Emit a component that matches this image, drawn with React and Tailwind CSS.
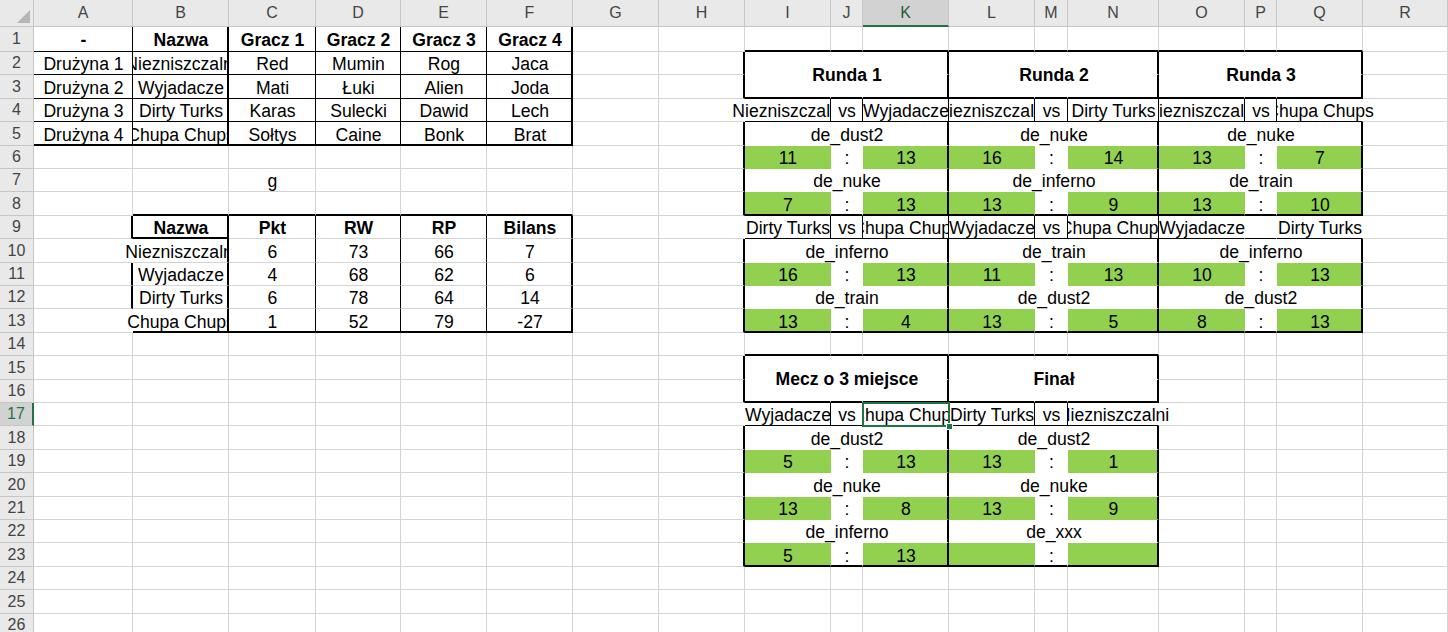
import React from "react";

// grid helpers (full class names so tailwind picks them up)
const COL_START = [
  "col-start-1", "col-start-2", "col-start-3", "col-start-4", "col-start-5",
  "col-start-6", "col-start-7", "col-start-8", "col-start-9", "col-start-10",
  "col-start-11", "col-start-12", "col-start-13", "col-start-14", "col-start-15",
  "col-start-16", "col-start-17", "col-start-18", "col-start-19",
];
const ROW_START = [
  "row-start-1", "row-start-2", "row-start-3", "row-start-4", "row-start-5",
  "row-start-6", "row-start-7", "row-start-8", "row-start-9", "row-start-10",
  "row-start-11", "row-start-12", "row-start-13", "row-start-14", "row-start-15",
  "row-start-16", "row-start-17", "row-start-18", "row-start-19", "row-start-20",
  "row-start-21", "row-start-22", "row-start-23", "row-start-24", "row-start-25",
  "row-start-26", "row-start-27",
];
const COL_SPAN = ["", "col-span-1", "col-span-2", "col-span-3"];
const ROW_SPAN = ["", "row-span-1", "row-span-2"];
const WIDTH = [
  "w-[34px]", "w-[99px]", "w-[96px]", "w-[87px]", "w-[85px]", "w-[86px]",
  "w-[86px]", "w-[86px]", "w-[86px]", "w-[86px]", "w-[32px]", "w-[86px]",
  "w-[86px]", "w-[33px]", "w-[91px]", "w-[86px]", "w-[32px]", "w-[86px]", "w-[85px]",
];
const LETTERS = ["", "A", "B", "C", "D", "E", "F", "G", "H", "I", "J", "K", "L", "M", "N", "O", "P", "Q", "R"];

const RIGHT = {
  g: "border-r border-r-[#d4d4d4]",
  t: "border-r border-r-black",
  m: "border-r-2 border-r-black",
  n: "border-r border-r-transparent",
};
const BOTTOM = {
  g: "border-b border-b-[#d4d4d4]",
  t: "border-b border-b-black",
  m: "border-b-2 border-b-black",
  n: "border-b border-b-transparent",
};

// edge maps: V = right edge of cell, H = bottom edge of cell
const V = Array.from({ length: 27 }, () => Array(19).fill("g"));
const H = Array.from({ length: 27 }, () => Array(19).fill("g"));
const green = new Set();
const texts = [];

const setV = (r, c, t) => (V[r][c] = t);
const setH = (r, c, t) => (H[r][c] = t);
const put = (r, c, t, o = {}) => texts.push({ r, c, t, ...o });

/* ---------- Teams table ---------- */
const teams = [
  ["-", "Nazwa", "Gracz 1", "Gracz 2", "Gracz 3", "Gracz 4"],
  ["Drużyna 1", "Niezniszczalni", "Red", "Mumin", "Rog", "Jaca"],
  ["Drużyna 2", "Wyjadacze", "Mati", "Łuki", "Alien", "Joda"],
  ["Drużyna 3", "Dirty Turks", "Karas", "Sulecki", "Dawid", "Lech"],
  ["Drużyna 4", "Chupa Chups", "Sołtys", "Caine", "Bonk", "Brat"],
];
for (let r = 1; r <= 5; r++) {
  setV(r, 1, "t");
  setV(r, 2, "m");
  setV(r, 3, "t");
  setV(r, 4, "t");
  setV(r, 5, "t");
  setV(r, 6, "m");
  for (let c = 1; c <= 6; c++) setH(r, c, r === 5 ? "m" : "t");
}
teams.forEach((row, i) => row.forEach((t, j) => put(i + 1, j + 1, t, { b: i === 0 })));

put(7, 3, "g");

/* ---------- Standings ---------- */
const standings = [
  ["Nazwa", "Pkt", "RW", "RP", "Bilans"],
  ["Niezniszczalni", "6", "73", "66", "7"],
  ["Wyjadacze", "4", "68", "62", "6"],
  ["Dirty Turks", "6", "78", "64", "14"],
  ["Chupa Chups", "1", "52", "79", "-27"],
];
for (let c = 2; c <= 6; c++) {
  setH(8, c, "m");
  setH(13, c, "m");
}
setV(9, 1, "m");
setH(9, 2, "m");
for (let r = 9; r <= 13; r++) {
  setV(r, 2, "m");
  setV(r, 3, "t");
  setV(r, 4, "t");
  setV(r, 5, "t");
  setV(r, 6, "m");
}
setV(10, 1, "n");
setV(11, 1, "m");
setV(12, 1, "m");
setV(13, 1, "n");
standings.forEach((row, i) =>
  row.forEach((t, j) =>
    put(i + 9, j + 2, t, { b: i === 0, ov: j === 0 && (i === 1 || i === 4) ? "L" : undefined })
  )
);

/* ---------- Brackets ---------- */
function header(c1, hr, title) {
  for (let c = c1; c <= c1 + 2; c++) {
    setH(hr - 1, c, "m");
    setH(hr, c, "n");
    setH(hr + 1, c, "m");
  }
  for (let r = hr; r <= hr + 1; r++) {
    setV(r, c1 - 1, "m");
    setV(r, c1, "n");
    setV(r, c1 + 1, "n");
    setV(r, c1 + 2, "m");
  }
  put(hr, c1, title, { b: true, span: 3, rows: 2 });
}

function game(c1, tr, [a, vs, b], maps, o = {}) {
  if (c1 === 9) setV(tr, 8, "n");
  setV(tr, c1, vs ? "t" : "n");
  setV(tr, c1 + 1, vs ? "t" : "n");
  setV(tr, c1 + 2, o.openRight ? "n" : "t");
  for (let c = c1; c <= c1 + 2; c++) setH(tr, c, "t");
  put(tr, c1, a, { ov: o.ovA });
  put(tr, c1 + 1, vs);
  put(tr, c1 + 2, b, { ov: o.ovB });

  maps.forEach(([m, sa, sb], i) => {
    const r1 = tr + 1 + i * 2;
    const r2 = r1 + 1;
    for (const r of [r1, r2]) {
      setV(r, c1 - 1, "m");
      setV(r, c1, "n");
      setV(r, c1 + 1, "n");
      setV(r, c1 + 2, "m");
    }
    for (let c = c1; c <= c1 + 2; c++) {
      setH(r1, c, "n");
      setH(r2, c, i === maps.length - 1 ? "m" : "n");
    }
    green.add(`${r2},${c1}`);
    green.add(`${r2},${c1 + 2}`);
    put(r1, c1, m, { span: 3 });
    put(r2, c1, sa);
    put(r2, c1 + 1, ":");
    put(r2, c1 + 2, sb);
  });
}

// Runda 1
header(9, 2, "Runda 1");
game(9, 4, ["Niezniszczalni", "vs", "Wyjadacze"], [["de_dust2", "11", "13"], ["de_nuke", "7", "13"]], { ovA: "L" });
game(9, 9, ["Dirty Turks", "vs", "Chupa Chups"], [["de_inferno", "16", "13"], ["de_train", "13", "4"]]);
// Runda 2
header(12, 2, "Runda 2");
game(12, 4, ["Niezniszczalni", "vs", "Dirty Turks"], [["de_nuke", "16", "14"], ["de_inferno", "13", "9"]]);
game(12, 9, ["Wyjadacze", "vs", "Chupa Chups"], [["de_train", "11", "13"], ["de_dust2", "13", "5"]]);
// Runda 3
header(15, 2, "Runda 3");
game(15, 4, ["Niezniszczalni", "vs", "Chupa Chups"], [["de_nuke", "13", "7"], ["de_train", "13", "10"]], { ovB: "R", openRight: true });
game(15, 9, ["Wyjadacze", "", "Dirty Turks"], [["de_inferno", "10", "13"], ["de_dust2", "8", "13"]], { openRight: true });
// Mecz o 3 miejsce / Finał
header(9, 15, "Mecz o 3 miejsce");
game(9, 17, ["Wyjadacze", "vs", "Chupa Chups"], [["de_dust2", "5", "13"], ["de_nuke", "13", "8"], ["de_inferno", "5", "13"]]);
header(12, 15, "Finał");
game(12, 17, ["Dirty Turks", "vs", "Niezniszczalni"], [["de_dust2", "13", "1"], ["de_nuke", "13", "9"], ["de_xxx", "", ""]], { ovB: "R", openRight: true });

const SEL_COL = 11;
const SEL_ROW = 17;

function Text({ r, c, t, b, span = 1, rows = 1, ov }) {
  if (!t) return null;
  const base = `${ROW_START[r]} ${ROW_SPAN[rows]} flex items-center overflow-hidden whitespace-nowrap ${
    rows === 1 ? "pt-[2px]" : ""
  } ${b ? "font-bold" : ""}`;
  if (ov === "L") {
    return (
      <div className={`${COL_START[c - 1]} col-span-2 ${base} justify-end`}>
        <div className={`${WIDTH[c]} flex shrink-0 justify-center`}>
          <span>{t}</span>
        </div>
      </div>
    );
  }
  if (ov === "R") {
    return (
      <div className={`${COL_START[c]} col-span-2 ${base} justify-start`}>
        <div className={`${WIDTH[c]} flex shrink-0 justify-center`}>
          <span>{t}</span>
        </div>
      </div>
    );
  }
  return (
    <div className={`${COL_START[c]} ${COL_SPAN[span]} ${base} justify-center`}>
      <span>{t}</span>
    </div>
  );
}

export default function App() {
  const base = [];
  for (let r = 1; r <= 26; r++) {
    for (let c = 1; c <= 18; c++) {
      const fill = green.has(`${r},${c}`) ? "bg-[#92d050]" : "bg-white";
      base.push(
        <div
          key={`b${r}-${c}`}
          className={`${COL_START[c]} ${ROW_START[r]} ${RIGHT[V[r][c]]} ${BOTTOM[H[r][c]]} ${fill}`}
        />
      );
    }
  }

  const colHeads = LETTERS.slice(1).map((l, i) => {
    const c = i + 1;
    const sel = c === SEL_COL;
    return (
      <div
        key={`h${c}`}
        className={`${COL_START[c]} row-start-1 flex items-center justify-center border-r border-r-[#c6c6c6] ${
          sel
            ? "border-b-2 border-b-[#217346] bg-[#d2d2d2] text-[#2c5a41]"
            : "border-b border-b-[#c6c6c6] bg-[#e9e9e9] text-[#444]"
        }`}
      >
        {l}
      </div>
    );
  });

  const rowHeads = [];
  for (let r = 1; r <= 26; r++) {
    const sel = r === SEL_ROW;
    rowHeads.push(
      <div
        key={`r${r}`}
        className={`col-start-1 ${ROW_START[r]} flex items-center justify-center border-b border-b-[#c6c6c6] ${
          sel
            ? "border-r-2 border-r-[#217346] bg-[#d2d2d2] text-[#217346]"
            : "border-r border-r-[#c6c6c6] bg-[#e9e9e9] text-[#444]"
        }`}
      >
        {r}
      </div>
    );
  }

  return (
    <div className="h-[632px] w-[1448px] overflow-hidden bg-white font-['Liberation_Sans',Arial,sans-serif] text-[17.6px] text-black">
      <div className="grid grid-cols-[34px_99px_96px_87px_85px_86px_86px_86px_86px_86px_32px_86px_86px_33px_91px_86px_32px_86px_85px] grid-rows-[27px_25px_23px_24px_23px_24px_23px_23px_24px_23px_24px_23px_23px_24px_23px_24px_23px_23px_24px_23px_24px_23px_23px_24px_23px_24px_23px]">
        {/* corner */}
        <div className="col-start-1 row-start-1 border-r border-b border-[#c6c6c6] bg-[#e9e9e9]">
          <svg viewBox="0 0 33 26" className="h-full w-full">
            <polygon points="30,10 30,23 17,23" fill="#b6b6b6" />
          </svg>
        </div>
        <div className="contents text-[16px]">
          {colHeads}
          {rowHeads}
        </div>

        {base}

        {texts.map((t, i) => (
          <Text key={`t${i}`} {...t} />
        ))}

        {/* active cell K17 */}
        <div className={`${COL_START[SEL_COL]} ${ROW_START[SEL_ROW]} relative -m-px border-2 border-[#217346]`}>
          <div className="absolute -right-[5px] -bottom-[5px] h-[7px] w-[7px] border border-white bg-[#217346]" />
        </div>
      </div>
    </div>
  );
}
